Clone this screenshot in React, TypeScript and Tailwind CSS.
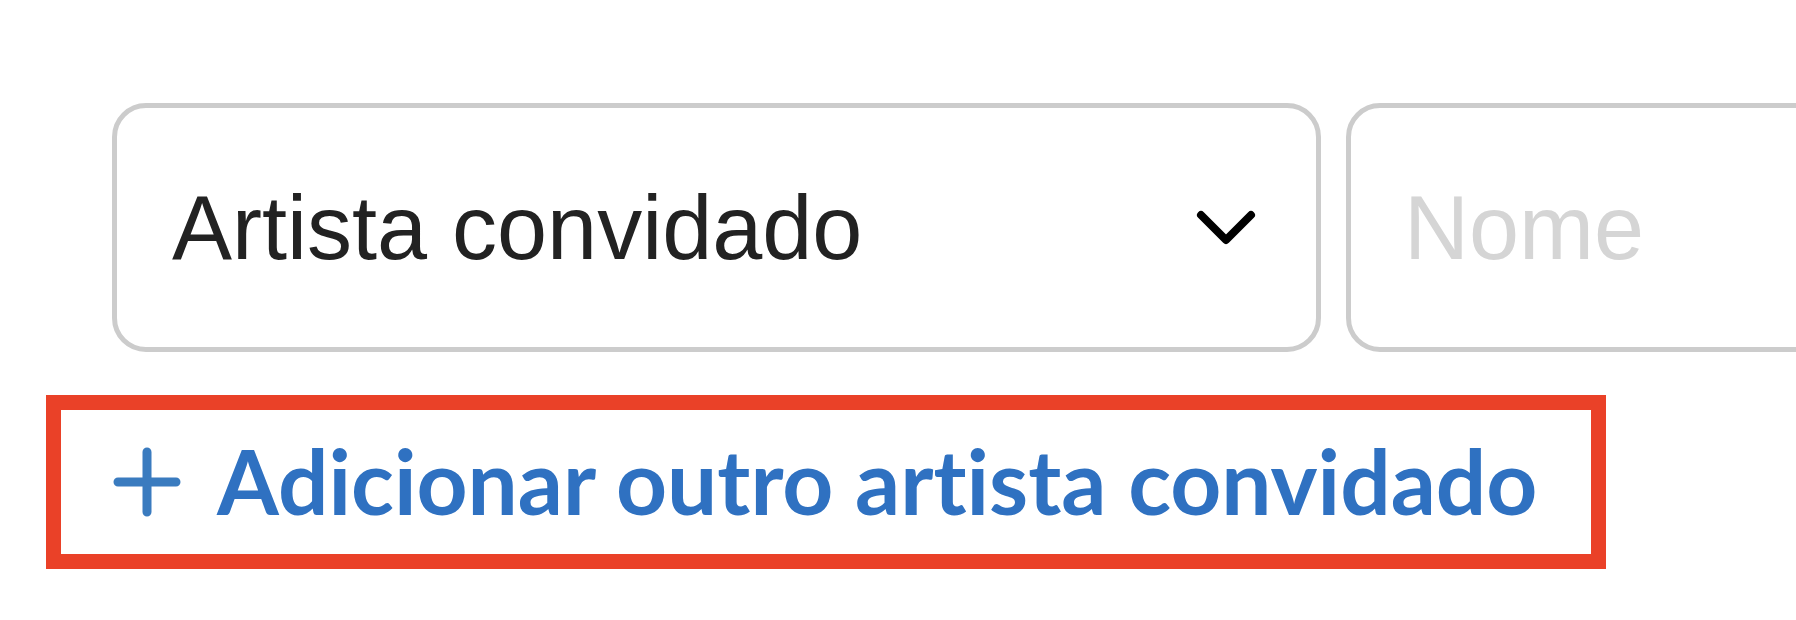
function Chevron() {
  return (
    <svg width="60" height="36" viewBox="0 0 60 36" fill="none" className="shrink-0">
      <polyline
        points="5,5 30,30 55,5"
        stroke="#000"
        strokeWidth="8"
        strokeLinecap="round"
        strokeLinejoin="round"
      />
    </svg>
  );
}

function PlusIcon() {
  return (
    <svg width="68" height="70" viewBox="0 0 68 70" fill="none" className="shrink-0">
      <path d="M34 5 V65 M5 35 H63" stroke="#3a7bbf" strokeWidth="9" strokeLinecap="round" />
    </svg>
  );
}

export default function App() {
  return (
    <div className="w-[1796px] h-[620px] overflow-hidden bg-white pt-[103px]">
      {/* guest artist row */}
      <div className="flex items-center gap-[25px] pl-[112px]">
        <div className="flex items-center justify-between w-[1209px] h-[249px] shrink-0 rounded-[34px] border-[5px] border-[#cccccc] bg-white pl-[55px] pr-[60px]">
          <span className="text-[90px] leading-none text-[#222222] font-['Liberation_Sans',Arial,sans-serif]">
            Artista convidado
          </span>
          <Chevron />
        </div>
        <div className="flex items-center w-[700px] h-[249px] shrink-0 rounded-[34px] border-[5px] border-[#cccccc] bg-white pl-[53px]">
          <span className="text-[90px] leading-none text-[#d5d5d5] font-['Liberation_Sans',Arial,sans-serif]">
            Nome
          </span>
        </div>
      </div>

      {/* add another guest artist */}
      <div className="pl-[46px] mt-[43px]">
        <button className="flex items-center gap-[36px] w-[1560px] h-[174px] border-[15px] border-[#ea4128] bg-white pl-[52px] cursor-pointer">
          <PlusIcon />
          <span className="text-[89px] leading-none font-bold text-[#2f71c1] font-['Lato','Noto_Sans',sans-serif] [font-variant-ligatures:none] -translate-y-[2px]">
            Adicionar outro artista convidado
          </span>
        </button>
      </div>
    </div>
  );
}
